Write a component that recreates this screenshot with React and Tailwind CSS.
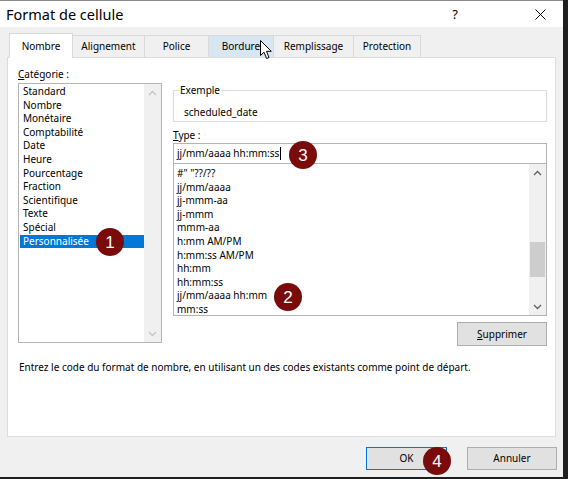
import React from 'react';

// Format de cellule dialog (Excel, Windows 10 look)

const categories = [
  'Standard', 'Nombre', 'Monétaire', 'Comptabilité', 'Date', 'Heure',
  'Pourcentage', 'Fraction', 'Scientifique', 'Texte', 'Spécial', 'Personnalisée',
];

const formats = [
  '#" "??/??', 'jj/mm/aaaa', 'jj-mmm-aa', 'jj-mmm', 'mmm-aa', 'h:mm AM/PM',
  'h:mm:ss AM/PM', 'hh:mm', 'hh:mm:ss', 'jj/mm/aaaa hh:mm', 'mm:ss',
];

const tabs = [
  { label: 'Nombre', w: 'w-[64px]' },
  { label: 'Alignement', w: 'w-[72px]' },
  { label: 'Police', w: 'w-[64px]' },
  { label: 'Bordure', w: 'w-[65px]' },
  { label: 'Remplissage', w: 'w-[80px]' },
  { label: 'Protection', w: 'w-[67px]' },
];

const Chevron = ({ up, color }) => (
  <svg width="9" height="6" viewBox="0 0 9 6">
    <path
      d={up ? 'M1 5 L4.5 1.5 L8 5' : 'M1 1 L4.5 4.5 L8 1'}
      fill="none"
      stroke={color}
      strokeWidth="1.3"
    />
  </svg>
);

// Red numbered annotation circles laid over the screenshot
const Badge = ({ n, className }) => (
  <div
    className={`absolute w-[28px] h-[28px] rounded-full bg-[#7a0b0b] text-white flex items-center justify-center text-[17px] leading-none font-['Liberation_Sans',sans-serif] ${className}`}
  >
    {n}
  </div>
);

const Button = ({ children, def, className }) => (
  <div
    className={`h-[23px] flex items-center justify-center bg-[#e1e1e1] border text-[10px] text-black ${def ? 'border-[#0078d7]' : 'border-[#adadad]'} ${className}`}
  >
    {children}
  </div>
);

export default function App() {
  return (
    <div className="relative w-[568px] h-[479px] bg-[#1f1f1f] overflow-hidden font-['Noto_Sans','Open_Sans',sans-serif] text-black">
      <div className="w-[563px] h-[477px] bg-[#f0f0f0] flex flex-col border-t border-[#8a8a8a]">
        {/* Title bar */}
        <div className="h-[26px] bg-white flex items-center">
          <div className="flex-1 pl-[6px] text-[14.5px] leading-none">Format de cellule</div>
          <div className="w-[46px] flex justify-center text-[13px] leading-none">?</div>
          <div className="w-[40px]" />
          <div className="w-[45px] flex justify-center">
            <svg width="11" height="11" viewBox="0 0 11 11">
              <path d="M0.5 0.5 L10.5 10.5 M10.5 0.5 L0.5 10.5" stroke="#000" strokeWidth="1" />
            </svg>
          </div>
        </div>

        {/* Tabs */}
        <div className="pt-[6px] pl-[9px] flex items-end h-[30px]">
          {tabs.map((t, i) =>
            i === 0 ? (
              <div
                key={t.label}
                className={`relative z-10 -mb-px h-[25px] ${t.w} bg-white border-x border-t border-[#d9d9d9] flex items-center justify-center text-[10px]`}
              >
                {t.label}
              </div>
            ) : (
              <div
                key={t.label}
                className={`h-[22px] ${t.w} border-t border-r border-[#d9d9d9] flex items-center justify-center text-[10px] ${t.label === 'Bordure' ? 'bg-[#d8e6f2] border-[#c4d8ec]' : 'bg-[#f0f0f0]'}`}
              >
                {t.label}
              </div>
            )
          )}
        </div>

        {/* Panel */}
        <div className="ml-[7px] w-[549px] h-[380px] bg-white border border-[#dcdcdc] flex flex-col">
          <div className="flex pt-[9px] pl-[10px]">
            {/* Category */}
            <div className="w-[144px] flex flex-col">
              <div className="text-[10px] leading-[14px]">
                <span className="underline">C</span>atégorie :
              </div>
              <div className="mt-[2px] h-[260px] border border-[#b4b4b4] flex">
                <div className="flex-1 pl-[1px] pt-[1px] text-[10px] leading-[13.6px]">
                  {categories.map((c) => (
                    <div
                      key={c}
                      className={`pl-[3px] ${c === 'Personnalisée' ? 'bg-[#0078d7] text-white' : ''}`}
                    >
                      {c}
                    </div>
                  ))}
                </div>
                <div className="w-[17px] bg-[#f0f0f0] flex flex-col justify-between">
                  <div className="h-[17px] flex items-center justify-center">
                    <Chevron up color="#c5c5c5" />
                  </div>
                  <div className="h-[17px] flex items-center justify-center">
                    <Chevron color="#c5c5c5" />
                  </div>
                </div>
              </div>
            </div>

            {/* Right side */}
            <div className="ml-[11px] w-[374px] flex flex-col">
              <fieldset className="mt-[16px] border border-[#dcdcdc] pb-[2px]">
                <legend className="ml-[5px] px-[1px] text-[10px] leading-[14px]">Exemple</legend>
                <div className="pt-[8px] pl-[10px] text-[10px] leading-[14px]">scheduled_date</div>
              </fieldset>

              <div className="mt-[6px] text-[10px] leading-[14px]">
                <span className="underline">T</span>ype :
              </div>
              <div className="mt-[1px] h-[21px] border border-[#b4b4b4] flex items-center pl-[3px] text-[10px]">
                jj/mm/aaaa hh:mm:ss
                <span className="ml-[1px] w-px h-[13px] bg-black" />
              </div>
              <div className="h-[152px] border-x border-b border-[#b4b4b4] flex">
                <div className="flex-1 overflow-hidden pl-[3px] pt-[3px] text-[10px] leading-[13.6px]">
                  {formats.map((f) => (
                    <div key={f} className="whitespace-pre">{f}</div>
                  ))}
                </div>
                <div className="w-[17px] bg-[#f0f0f0] flex flex-col">
                  <div className="h-[17px] flex items-center justify-center">
                    <Chevron up color="#606060" />
                  </div>
                  <div className="flex-1 px-[1px]">
                    <div className="mt-[61px] h-[35px] bg-[#cdcdcd]" />
                  </div>
                  <div className="h-[17px] flex items-center justify-center">
                    <Chevron color="#606060" />
                  </div>
                </div>
              </div>

              <Button className="mt-[6px] self-end w-[90px] h-[24px]">
                <span className="underline">S</span>upprimer
              </Button>
            </div>
          </div>

          <div className="mt-[14px] pl-[11px] text-[10px] leading-[14px]">
            Entrez le code du format de nombre, en utilisant un des codes existants comme point de départ.
          </div>
        </div>

        {/* Footer */}
        <div className="mt-[10px] flex justify-end gap-[20px] pr-[6px]">
          <Button def className="w-[81px]">OK</Button>
          <Button className="w-[90px]">Annuler</Button>
        </div>
      </div>

      {/* Mouse pointer over Bordure tab */}
      <svg className="absolute left-[260px] top-[40px]" width="13" height="20" viewBox="0 0 13 20">
        <path
          d="M0.5 0.5 L0.5 15.5 L4 12.2 L6.6 18.5 L9 17.5 L6.5 11.3 L11.3 11.3 Z"
          fill="#fff"
          stroke="#000"
          strokeWidth="1"
          strokeLinejoin="round"
        />
      </svg>

      <Badge n="1" className="left-[96px] top-[228px]" />
      <Badge n="2" className="left-[274px] top-[283px]" />
      <Badge n="3" className="left-[289px] top-[141px]" />
      <Badge n="4" className="left-[423px] top-[447px]" />
    </div>
  );
}
